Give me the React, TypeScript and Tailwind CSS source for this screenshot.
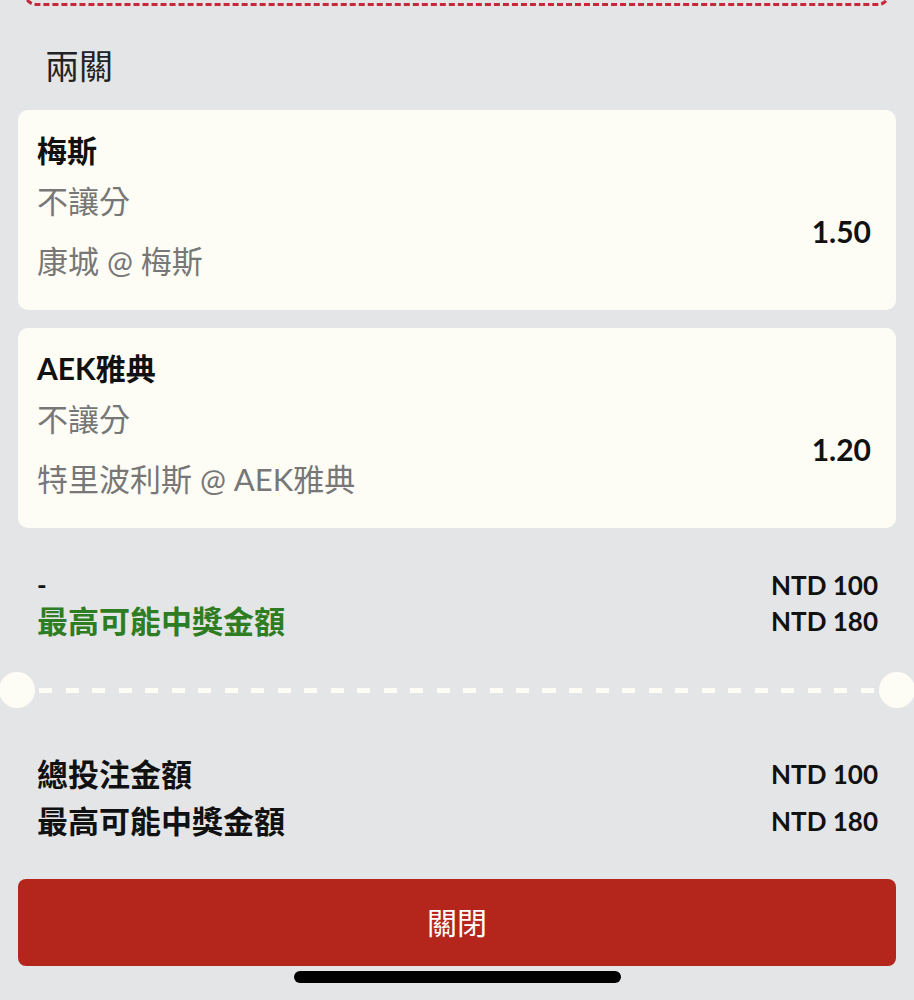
import React from 'react';

const font = { fontFamily: 'Lato, "Noto Sans CJK TC", sans-serif' };

type Leg = { pick: string; market: string; match: string; odds: string };

const legs: Leg[] = [
  { pick: '梅斯', market: '不讓分', match: '康城 @ 梅斯', odds: '1.50' },
  { pick: 'AEK雅典', market: '不讓分', match: '特里波利斯 @ AEK雅典', odds: '1.20' },
];

const LegCard = ({ leg }: { leg: Leg }) => (
  <div className="mx-[18px] rounded-[10px] bg-[#fefdf5] px-[19px] pt-[20px] pb-[19px]">
    <div className="text-[30px] font-bold leading-[40px] text-[#111]">{leg.pick}</div>
    <div className="mt-[1px] flex items-center justify-between">
      <div className="text-[31px] leading-[60px] text-[#777]">
        <div>{leg.market}</div>
        <div>{leg.match}</div>
      </div>
      <div className="pr-[6px] text-[30px] font-bold text-[#111]">{leg.odds}</div>
    </div>
  </div>
);

export default function App() {
  return (
    <div className="min-h-screen w-full overflow-hidden bg-[#e4e5e7]" style={font}>
      {/* cut-off dashed box from above */}
      <div className="mx-[24px] -mt-[34px] h-[40px] rounded-[12px] border-[3px] border-dashed border-[#c8283c]" />

      <div className="mt-[38px] pl-[45px] text-[34px] leading-[44px] text-[#222]">兩關</div>

      <div className="mt-[22px] flex flex-col gap-[18px]">
        {legs.map((leg) => (
          <LegCard key={leg.pick} leg={leg} />
        ))}
      </div>

      {/* leg summary */}
      <div className="mt-[39px] pr-[36px] pl-[37px] text-[26px] font-bold leading-[36px]">
        <div className="flex justify-between">
          <span className="text-[#111]">-</span>
          <span className="text-[#111]">NTD 100</span>
        </div>
        <div className="flex justify-between">
          <span className="text-[31px] text-[#2e7d22]">最高可能中獎金額</span>
          <span className="text-[#111]">NTD 180</span>
        </div>
      </div>

      {/* ticket separator */}
      <div className="mt-[33px] flex h-[36px] items-center">
        <div className="-ml-[1px] h-[36px] w-[36px] shrink-0 rounded-full bg-[#fefdf5]" />
        <div className="mx-[4px] h-[5px] flex-1 bg-[repeating-linear-gradient(90deg,#fefdf5_0_13px,transparent_13px_26.5px)]" />
        <div className="-mr-[1px] h-[36px] w-[36px] shrink-0 rounded-full bg-[#fefdf5]" />
      </div>

      {/* totals */}
      <div className="mt-[48px] flex flex-col gap-[11px] pr-[36px] pl-[37px] font-bold leading-[36px] text-[#111]">
        <div className="flex justify-between">
          <span className="text-[31px]">總投注金額</span>
          <span className="text-[26px]">NTD 100</span>
        </div>
        <div className="flex justify-between">
          <span className="text-[31px]">最高可能中獎金額</span>
          <span className="text-[26px]">NTD 180</span>
        </div>
      </div>

      <div className="mx-[18px] mt-[40px]">
        <button className="flex h-[87px] w-full items-center justify-center rounded-[8px] bg-[#b4261b] text-[30px] text-white">
          關閉
        </button>
      </div>

      <div className="mt-[5px] flex justify-center pl-[1px]">
        <div className="h-[12px] w-[327px] rounded-full bg-black" />
      </div>
    </div>
  );
}
